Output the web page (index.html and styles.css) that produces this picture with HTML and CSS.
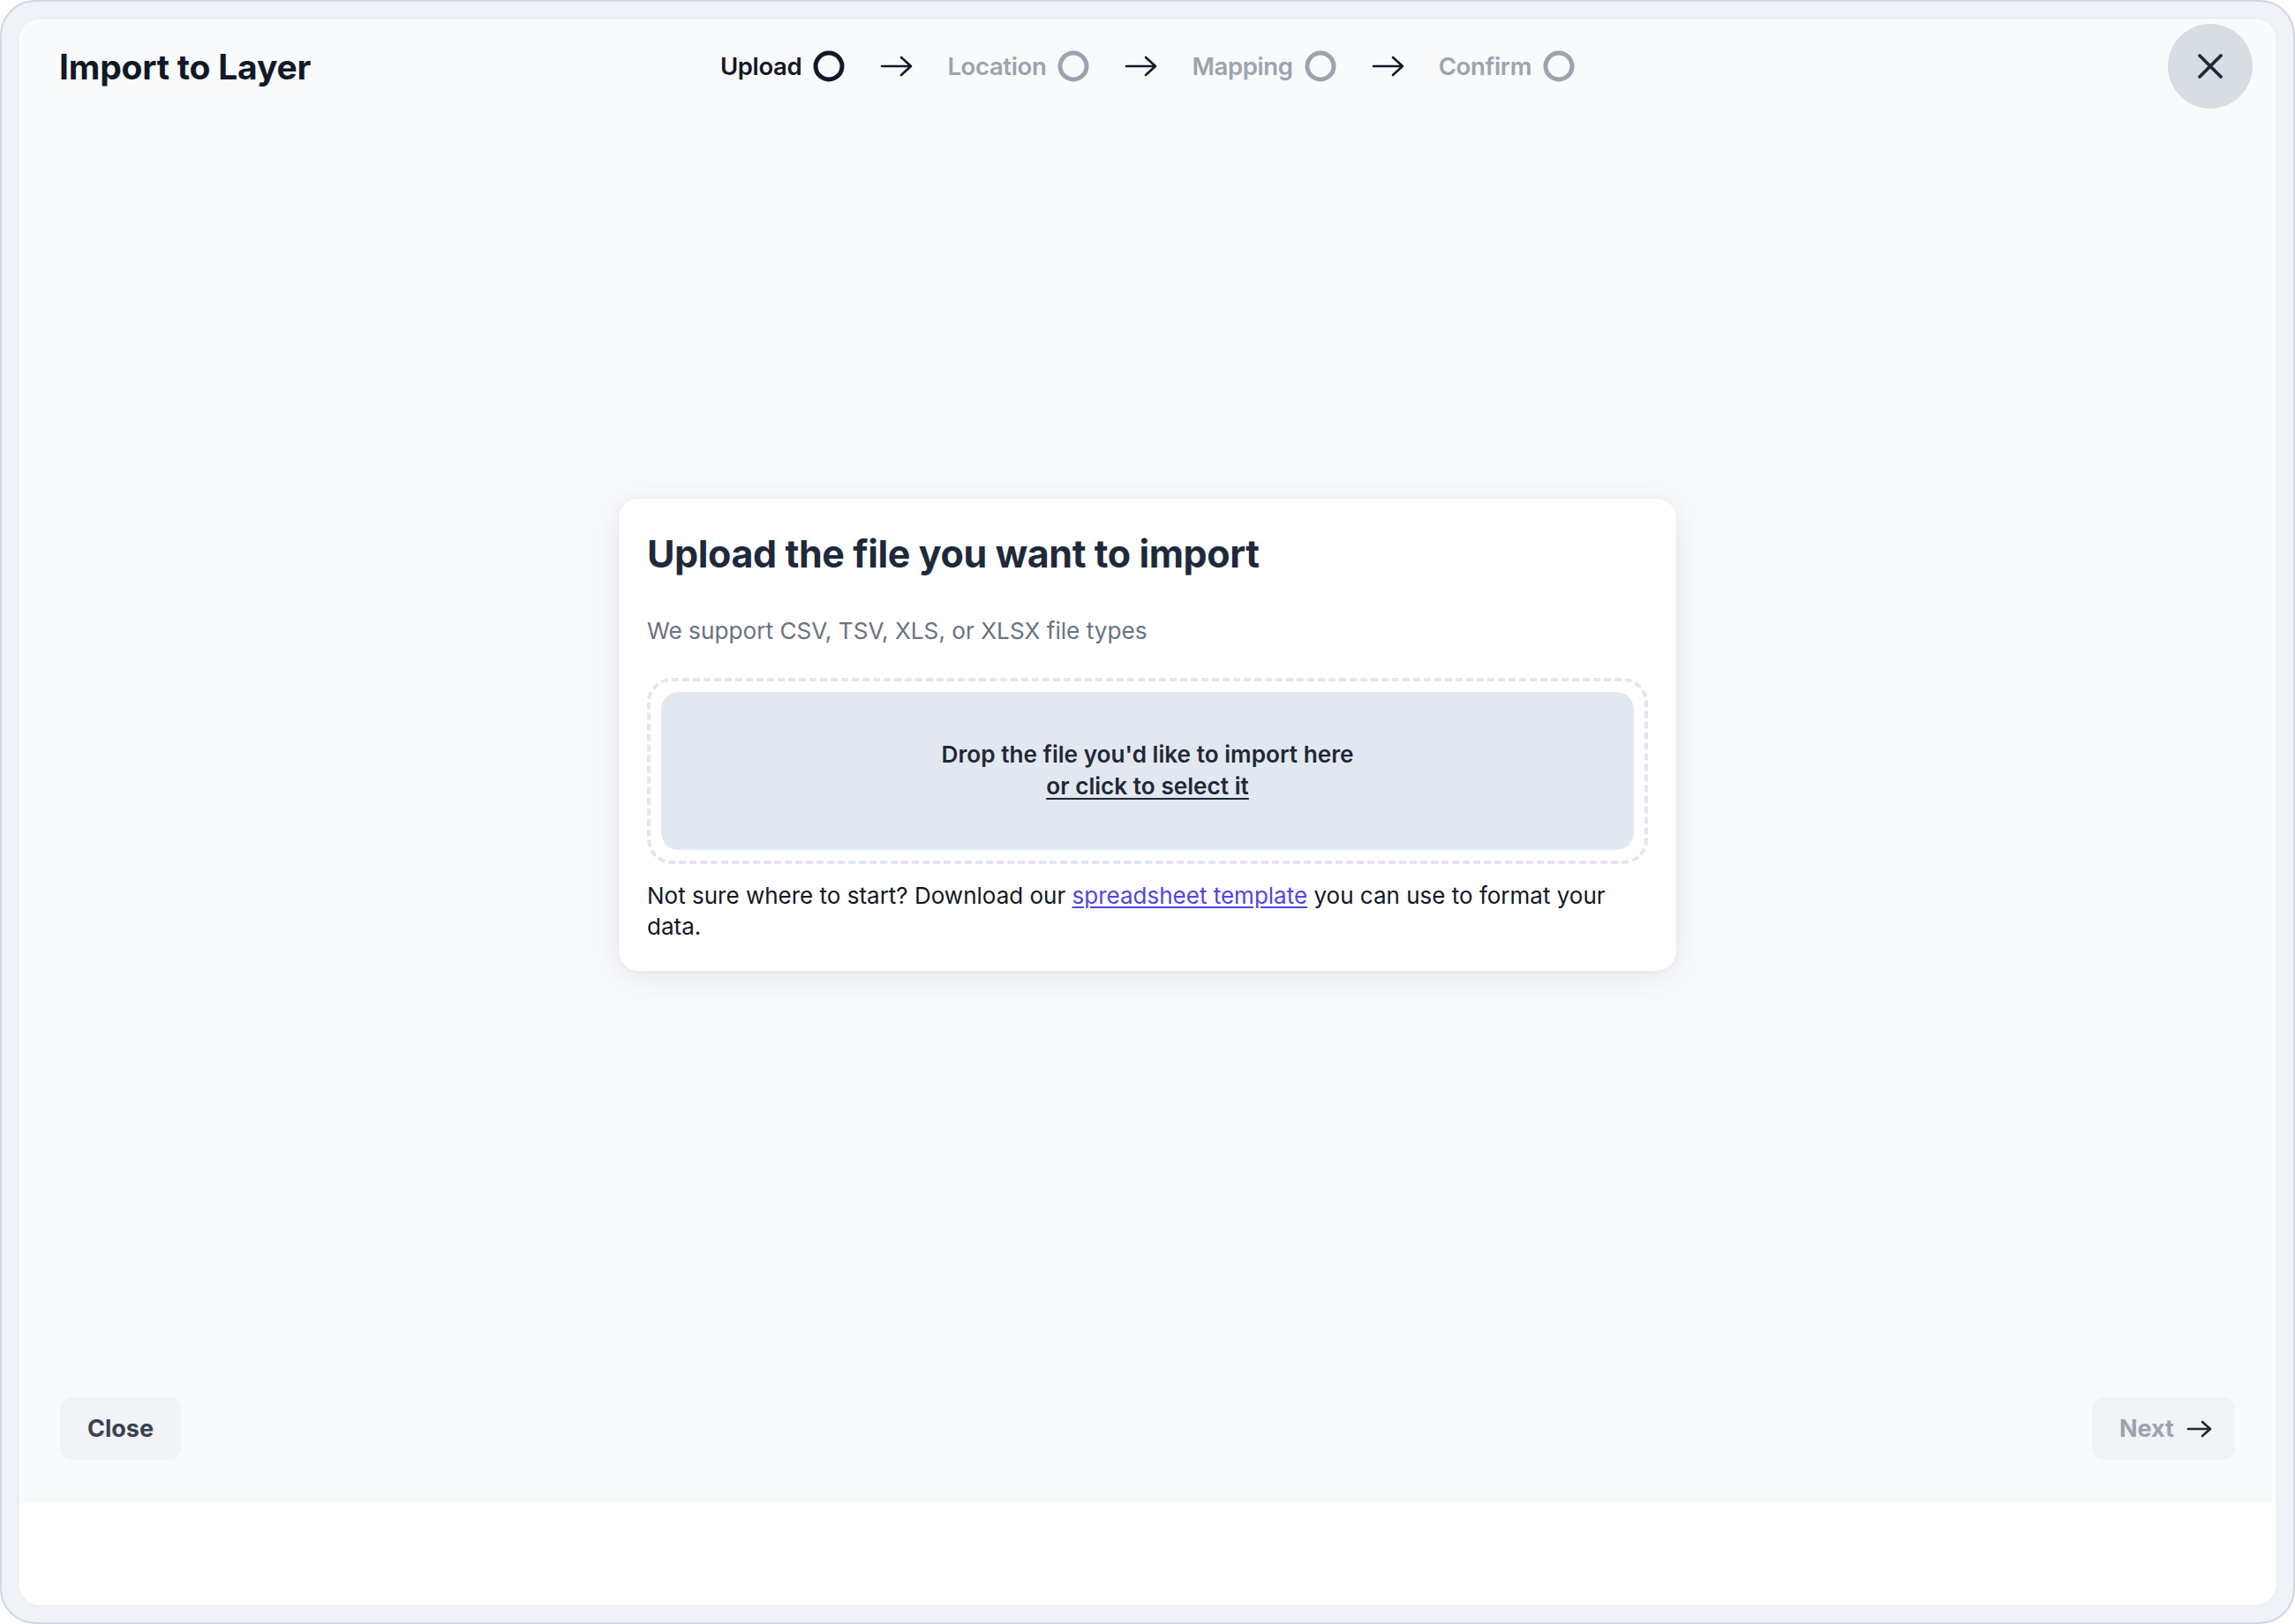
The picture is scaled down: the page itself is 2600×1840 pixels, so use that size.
FILE: index.html
```html
<!DOCTYPE html>
<html lang="en">
<head>
<meta charset="utf-8">
<title>Import to Layer</title>
<link rel="stylesheet" href="styles.css">
</head>
<body>
<div class="frame">
  <div class="panel">
    <div class="surface">
      <header class="header">
        <h1 class="title">Import to Layer</h1>
        <nav class="steps">
          <div class="step active">
            <span class="step-label">Upload</span>
            <svg class="step-circle" viewBox="0 0 36 36" width="36" height="36"><circle cx="18" cy="18" r="15" fill="none" stroke="currentColor" stroke-width="5"/></svg>
          </div>
          <svg class="step-arrow" viewBox="0 0 38 24" width="38" height="24"><path d="M2 12H35M24 2L35 12L24 22" fill="none" stroke="currentColor" stroke-width="2.6" stroke-linecap="round" stroke-linejoin="round"/></svg>
          <div class="step">
            <span class="step-label">Location</span>
            <svg class="step-circle" viewBox="0 0 36 36" width="36" height="36"><circle cx="18" cy="18" r="15" fill="none" stroke="currentColor" stroke-width="5"/></svg>
          </div>
          <svg class="step-arrow" viewBox="0 0 38 24" width="38" height="24"><path d="M2 12H35M24 2L35 12L24 22" fill="none" stroke="currentColor" stroke-width="2.6" stroke-linecap="round" stroke-linejoin="round"/></svg>
          <div class="step">
            <span class="step-label">Mapping</span>
            <svg class="step-circle" viewBox="0 0 36 36" width="36" height="36"><circle cx="18" cy="18" r="15" fill="none" stroke="currentColor" stroke-width="5"/></svg>
          </div>
          <svg class="step-arrow" viewBox="0 0 38 24" width="38" height="24"><path d="M2 12H35M24 2L35 12L24 22" fill="none" stroke="currentColor" stroke-width="2.6" stroke-linecap="round" stroke-linejoin="round"/></svg>
          <div class="step">
            <span class="step-label">Confirm</span>
            <svg class="step-circle" viewBox="0 0 36 36" width="36" height="36"><circle cx="18" cy="18" r="15" fill="none" stroke="currentColor" stroke-width="5"/></svg>
          </div>
        </nav>
        <div class="header-right">
          <button class="close-x" aria-label="Close">
            <svg viewBox="0 0 30 30" width="30" height="30"><path d="M3 3L27 27M27 3L3 27" fill="none" stroke="currentColor" stroke-width="3.8" stroke-linecap="round"/></svg>
          </button>
        </div>
      </header>

      <main class="main">
        <section class="card">
          <h2 class="card-title">Upload the file you want to import</h2>
          <p class="card-sub">We support CSV, TSV, XLS, or XLSX file types</p>
          <div class="dropzone">
            <div class="drop-inner">
              <span class="drop-line">Drop the file you'd like to import here</span>
              <span class="drop-link">or click to select it</span>
            </div>
          </div>
          <p class="card-help">Not sure where to start? Download our <a href="#" class="link">spreadsheet template</a> you can use to format your data.</p>
        </section>
      </main>

      <footer class="footer">
        <button class="btn">Close</button>
        <button class="btn btn-next">Next
          <svg class="next-arrow" viewBox="0 0 30 20" width="30" height="20"><path d="M2 10H27M18 2L27 10L18 18" fill="none" stroke="currentColor" stroke-width="2.6" stroke-linecap="round" stroke-linejoin="round"/></svg>
        </button>
      </footer>
    </div>
    <div class="bottom-strip"></div>
  </div>
</div>
</body>
</html>
```

FILE: styles.css
```css
* { box-sizing: border-box; }

html, body {
  margin: 0;
  padding: 0;
  background: #ffffff;
}

body {
  font-family: "Inter", "Noto Sans", "Liberation Sans", sans-serif;
  color: #111827;
}

.frame {
  width: 2600px;
  height: 1840px;
  border: 2px solid #cfd7e2;
  border-radius: 40px;
  background: #eff3f7;
  padding: 18px;
}

.panel {
  height: 100%;
  background: #ffffff;
  border-radius: 26px;
  border: 1px solid #e4e9ef;
  overflow: hidden;
  display: flex;
  flex-direction: column;
}

.surface {
  height: 1682px;
  background: #f8fafc;
  display: flex;
  flex-direction: column;
}

.bottom-strip {
  flex: 1;
  background: #ffffff;
}

/* header */
.header {
  height: 108px;
  display: grid;
  grid-template-columns: 1fr auto 1fr;
  align-items: center;
  padding: 0 27px;
}

.title {
  margin: 0;
  padding-left: 19px;
  font-size: 39px;
  font-weight: 700;
  letter-spacing: -0.2px;
  color: #111827;
}

.steps {
  display: flex;
  align-items: center;
}

.step {
  display: flex;
  align-items: center;
  gap: 13px;
  color: #9ca3af;
}

.step.active {
  color: #111827;
}

.step-label {
  font-size: 27.5px;
  font-weight: 600;
  letter-spacing: -0.35px;
}

.step-circle {
  display: block;
}

.step-arrow {
  display: block;
  margin: 0 38px 0 40px;
  color: #111827;
}

.header-right {
  display: flex;
  justify-content: flex-end;
}

.close-x {
  width: 96px;
  height: 96px;
  border-radius: 50%;
  border: none;
  background: #d8dce3;
  color: #1f2937;
  display: flex;
  align-items: center;
  justify-content: center;
  padding: 0;
}

.close-x svg { display: block; }

/* main */
.main {
  flex: 1;
  display: flex;
  align-items: center;
  justify-content: center;
}

.card {
  width: 1198px;
  background: #ffffff;
  border-radius: 22px;
  padding: 36px 32px 33px;
  box-shadow: 0 6px 36px rgba(15, 23, 42, 0.09), 0 1px 4px rgba(15, 23, 42, 0.04);
}

.card-title {
  margin: 0;
  font-size: 43px;
  line-height: 52px;
  font-weight: 700;
  letter-spacing: -0.4px;
  color: #1e293b;
}

.card-sub {
  margin: 42px 0 0;
  font-size: 26.2px;
  line-height: 40px;
  color: #6b7280;
}

.dropzone {
  margin-top: 33px;
  border: 4px dashed #e2e7ee;
  border-radius: 28px;
  padding: 12px;
}

.drop-inner {
  height: 179px;
  background: #e2e8f0;
  border-radius: 20px;
  display: flex;
  flex-direction: column;
  align-items: center;
  justify-content: center;
  font-size: 26.2px;
  line-height: 36px;
  font-weight: 600;
  color: #1f2937;
}

.drop-link {
  text-decoration: underline;
  text-underline-offset: 4px;
  text-decoration-thickness: 2px;
}

.card-help {
  margin: 18px 0 0;
  font-size: 26px;
  line-height: 35px;
  color: #111827;
}

.link {
  color: #4f46e5;
  text-decoration: underline;
  text-underline-offset: 3px;
}

/* footer */
.footer {
  display: flex;
  justify-content: space-between;
  align-items: center;
  padding: 48px 47px 49px;
}

.btn {
  height: 71px;
  border: none;
  border-radius: 14px;
  background: #f1f3f6;
  font-family: inherit;
  font-size: 27px;
  font-weight: 700;
  color: #374151;
  padding: 0 31px;
  display: flex;
  align-items: center;
}

.btn-next {
  color: #9ca3af;
  padding: 0 25px 0 31px;
  gap: 14px;
}

.next-arrow {
  display: block;
  color: #1f2937;
}
```
